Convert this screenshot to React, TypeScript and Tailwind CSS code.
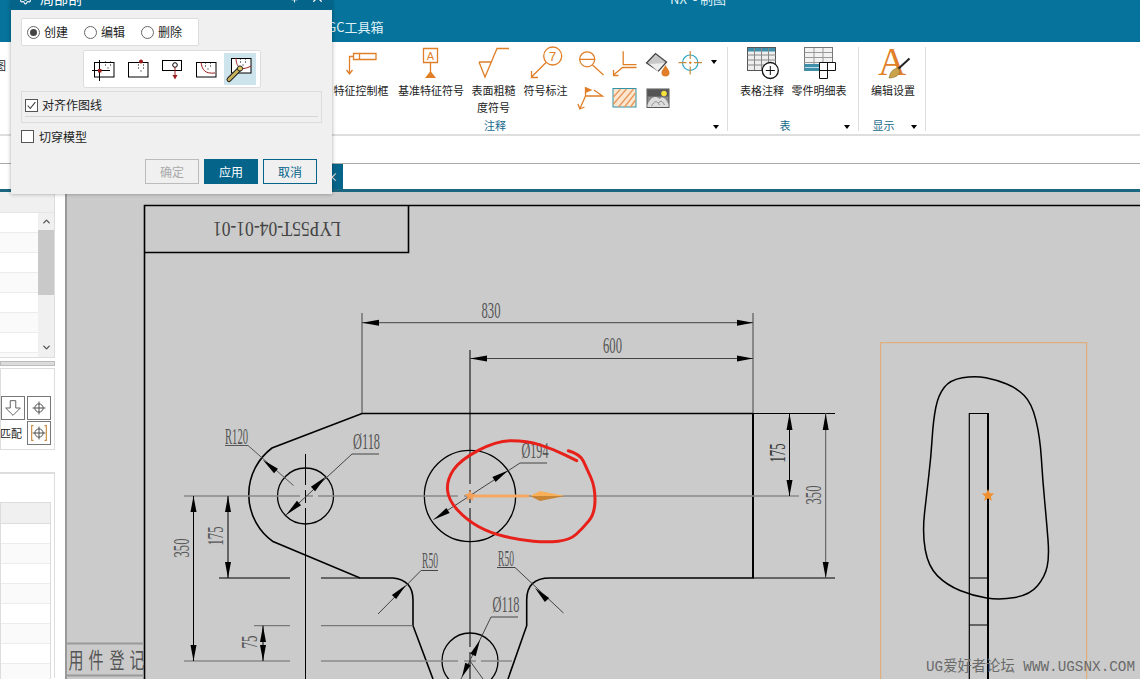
import { ChevronDown, ChevronUp, Settings, Pin, X } from "lucide-react";
import type { ReactNode } from "react";

type P = [number, number];

const orange = "#e07f28";

function smooth(pts: P[], closed = false) {
  const mid = (a: P, b: P): P => [(a[0] + b[0]) / 2, (a[1] + b[1]) / 2];
  if (closed) {
    const n = pts.length;
    let d = `M${mid(pts[n - 1], pts[0]).join(" ")}`;
    pts.forEach((p, i) => {
      d += ` Q${p.join(" ")} ${mid(p, pts[(i + 1) % n]).join(" ")}`;
    });
    return d + "Z";
  }
  let d = `M${pts[0].join(" ")}`;
  for (let i = 1; i < pts.length - 1; i++) {
    d += ` Q${pts[i].join(" ")} ${mid(pts[i], pts[i + 1]).join(" ")}`;
  }
  return d + ` L${pts[pts.length - 1].join(" ")}`;
}

function Arrow({ tip, base, w = 3, fill = "#000" }: { tip: P; base: P; w?: number; fill?: string }) {
  const dx = base[0] - tip[0];
  const dy = base[1] - tip[1];
  const l = Math.hypot(dx, dy);
  const nx = (-dy / l) * w;
  const ny = (dx / l) * w;
  return <polygon points={`${tip.join(",")} ${base[0] + nx},${base[1] + ny} ${base[0] - nx},${base[1] - ny}`} fill={fill} />;
}

function Star({ x, y, r, fill }: { x: number; y: number; r: number; fill: string }) {
  const pts = Array.from({ length: 10 }, (_, i) => {
    const a = (Math.PI / 5) * i - Math.PI / 2;
    const rr = i % 2 ? r * 0.45 : r;
    return `${x + rr * Math.cos(a)},${y + rr * Math.sin(a)}`;
  });
  return <polygon points={pts.join(" ")} fill={fill} />;
}

function DimText({ x, y, w, size = 23, rot = 0, fill = "#555", children }: { x: number; y: number; w: number; size?: number; rot?: number; fill?: string; children: ReactNode }) {
  return (
    <text
      x={x}
      y={y}
      textLength={w}
      lengthAdjust="spacingAndGlyphs"
      textAnchor="middle"
      dominantBaseline="central"
      fontSize={size}
      fill={fill}
      transform={rot ? `rotate(${rot} ${x} ${y})` : undefined}
      className="font-['Liberation_Serif','Noto_Sans_CJK_SC',serif]"
    >
      {children}
    </text>
  );
}

const redMark: P[] = [[568.3, 450.7], [580, 454], [586.7, 468.3], [595, 486.7], [595, 513.3], [583, 528], [570, 540], [546.7, 542.3], [520, 540], [490, 533], [466.7, 520], [448.3, 500], [446.7, 480], [460, 460], [496.7, 440.7], [526.7, 440.7], [553, 449], [576.7, 460.7]];
const sideBlob: P[] = [[975, 375.7], [950, 380], [938.3, 395], [933.3, 420], [931, 456.7], [926.7, 493.3], [922.3, 533.3], [928.3, 566.7], [946.7, 585], [973.3, 596], [1000, 600], [1030, 595], [1045, 576.7], [1049.3, 556.7], [1046.7, 523], [1042.7, 480], [1040, 436.7], [1031.7, 403], [1016.7, 388], [996.7, 380]];

function Drawing() {
  return (
    <svg viewBox="67 192 1073 487" className="block w-full h-full">
      {/* sheet */}
      <path d="M1140 205.5H144.5V679M144.5 252.5H408.5V205.5" fill="none" stroke="#000" strokeWidth="1.6" />
      <DimText x={277} y={229} w={128} size={21} rot={180} fill="#444">LYP55T-04-01-01</DimText>
      <path d="M67 643.5H144M67 675.5H144" stroke="#9a9a9a" strokeWidth="2" />
      <DimText x={76} y={660} w={15} size={22} fill="#555">用</DimText>
      <DimText x={96} y={660} w={15} size={22} fill="#555">件</DimText>
      <DimText x={117} y={660} w={15} size={22} fill="#555">登</DimText>
      <DimText x={137} y={660} w={15} size={22} fill="#555">记</DimText>

      {/* outline */}
      <path d="M753 413.5H362L272 448A58 58 0 0 0 273 541.6L360 578H393Q413 580 413 600V625.7L433 679M508 679L526.7 625.7V600Q526.7 578 550 578H753V413.5" fill="none" stroke="#000" strokeWidth="1.6" />
      <path d="M753 413V578" stroke="#000" strokeWidth="2" />
      <circle cx="305.5" cy="496" r="28" fill="none" stroke="#000" strokeWidth="1.3" />
      <circle cx="470" cy="496" r="45.7" fill="none" stroke="#000" strokeWidth="1.3" />
      <circle cx="470" cy="661" r="28" fill="none" stroke="#000" strokeWidth="1.3" />

      {/* center lines */}
      <path d="M184 496H300M306 496H313M318 496H458M464 496H799M184 661H290M321 661H458M464 661H476M481 661H512" stroke="#8a8a8a" strokeWidth="1.6" />
      <path d="M305.5 454V485M305.5 490V503M305.5 508V679M470 350V484M470 490V503M470 508V647M470 652V679" stroke="#000" strokeWidth="1" />
      <path d="M219 578H290M321 578H360M753 413.5H835M753 578H835" stroke="#000" strokeWidth="1" />
      <path d="M254 625.7H290M321 625.7H413" stroke="#666" strokeWidth="1" />

      {/* 830 / 600 */}
      <path d="M362 313V413M753 313V413M362 322.7H753M470 358.5H753" stroke="#444" strokeWidth="1" />
      <Arrow tip={[362, 322.7]} base={[379, 322.7]} />
      <Arrow tip={[753, 322.7]} base={[737, 322.7]} />
      <Arrow tip={[470, 358.5]} base={[487, 358.5]} />
      <Arrow tip={[753, 358.5]} base={[737, 358.5]} />
      <DimText x={491} y={310} w={19}>830</DimText>
      <DimText x={612.5} y={345.5} w={19}>600</DimText>

      {/* right dims */}
      <path d="M789.5 413V496" stroke="#000" strokeWidth="1" />
      <path d="M825.7 413V578" stroke="#555" strokeWidth="1" />
      <Arrow tip={[789.5, 413.5]} base={[789.5, 430]} />
      <Arrow tip={[789.5, 496]} base={[789.5, 480]} />
      <Arrow tip={[825.7, 413.5]} base={[825.7, 430]} />
      <Arrow tip={[825.7, 578]} base={[825.7, 562]} />
      <DimText x={777} y={453} w={19} rot={-90} fill="#333">175</DimText>
      <DimText x={813.5} y={495} w={19} rot={-90}>350</DimText>

      {/* left dims */}
      <path d="M193.5 496V661M228 496V578M263 625.7V661" stroke="#000" strokeWidth="1" />
      <Arrow tip={[193.5, 496]} base={[193.5, 512]} />
      <Arrow tip={[193.5, 661]} base={[193.5, 645]} />
      <Arrow tip={[228, 496]} base={[228, 512]} />
      <Arrow tip={[228, 578]} base={[228, 562]} />
      <Arrow tip={[263, 626]} base={[263, 642]} />
      <Arrow tip={[263, 661]} base={[263, 645]} />
      <DimText x={181} y={548} w={19} rot={-90}>350</DimText>
      <DimText x={215} y={536} w={19} rot={-90}>175</DimText>
      <DimText x={249} y={642} w={13} rot={-90}>75</DimText>

      {/* leaders */}
      <path d="M225 445.5H248L293.5 485.5" fill="none" stroke="#555" strokeWidth="1" />
      <Arrow tip={[263, 460]} base={[276, 471]} />
      <DimText x={236.5} y={436} w={23}>R120</DimText>

      <path d="M379 454H352L286 515" fill="none" stroke="#444" strokeWidth="1" />
      <Arrow tip={[326, 476.5]} base={[313, 489]} />
      <Arrow tip={[286, 515]} base={[299, 503]} />
      <DimText x={366.5} y={441} w={27}>Ø118</DimText>

      <path d="M547 463H520L433.5 519.5" fill="none" stroke="#444" strokeWidth="1" />
      <Arrow tip={[508, 470.5]} base={[494, 479.5]} />
      <Arrow tip={[434, 519.5]} base={[448, 510.5]} />
      <DimText x={535} y={450} w={27}>Ø194</DimText>

      <path d="M438 570.5H421L378 614" fill="none" stroke="#444" strokeWidth="1" />
      <Arrow tip={[406, 585]} base={[394, 597]} />
      <DimText x={430} y={560} w={16}>R50</DimText>

      <path d="M497 567.5H515L563.5 613" fill="none" stroke="#444" strokeWidth="1" />
      <Arrow tip={[535, 588]} base={[547, 600]} />
      <DimText x={506} y={558.5} w={16}>R50</DimText>

      <path d="M518 617H491L461 679M470 661L483 679" fill="none" stroke="#444" strokeWidth="1" />
      <Arrow tip={[480, 640]} base={[473, 655]} />
      <Arrow tip={[462, 677]} base={[468, 664]} />
      <DimText x={506} y={604} w={27}>Ø118</DimText>

      {/* vector handle */}
      <path d="M470 496H529" stroke="#f5a863" strokeWidth="3" />
      <polygon points="530,496 540,491 565,496" fill="#f7b058" />
      <polygon points="530,496 540,501 565,496" fill="#c98536" />
      <Star x={470} y={496} r={6} fill="#f5a05a" />

      {/* red pen mark */}
      <path d={smooth(redMark)} fill="none" stroke="#e8201a" strokeWidth="3" strokeLinecap="round" />

      {/* side view */}
      <rect x="880.7" y="342.7" width="206" height="360" fill="none" stroke="#e5a66c" strokeWidth="1" />
      <path d={smooth(sideBlob, true)} fill="none" stroke="#000" strokeWidth="1.5" />
      <path d="M969.3 679V413.5H988M969.3 578H988M969.3 625H988" fill="none" stroke="#000" strokeWidth="1.2" />
      <path d="M988 413V679" stroke="#000" strokeWidth="2" />
      <Star x={988} y={495.5} r={6.5} fill="#ef8f2e" />

      {/* forum watermark */}
      <text x="926" y="671" textLength="209" lengthAdjust="spacingAndGlyphs" fontSize="15" fill="#6a6a6a" className="font-['Liberation_Mono','Noto_Sans_CJK_SC',monospace]">
        UG爱好者论坛 WWW.UGSNX.COM
      </text>
    </svg>
  );
}

function Rows({ n, className }: { n: number; className?: string }) {
  return (
    <div className={className}>
      {Array.from({ length: n }, (_, i) => (
        <div key={i} className={`h-[20px] border-b border-[#ececec] ${i % 2 ? "bg-[#fafafa]" : "bg-white"}`} />
      ))}
    </div>
  );
}

function Crosshair({ bracket }: { bracket?: boolean }) {
  return (
    <svg viewBox="0 0 24 24" className="w-[24px] h-[24px] border border-[#777] bg-white">
      <circle cx="12" cy="12" r="4.5" fill="none" stroke="#444" strokeWidth="1" />
      <path d="M12 5V19M5 12H19" stroke="#444" strokeWidth="1" />
      {bracket && <path d="M6 4H4V20H6M18 4H20V20H18" fill="none" stroke="#c98a3c" strokeWidth="1.2" />}
    </svg>
  );
}

function LeftPanel() {
  return (
    <div className="w-[65px] shrink-0 h-full bg-white overflow-hidden">
      <div className="w-[55px] h-[166px] border-r border-b border-[#ddd] flex flex-col">
        <div className="h-[21px] shrink-0 bg-[#f0f0f0] border-b border-[#e6e6e6]" />
        <div className="flex flex-1 overflow-hidden">
          <Rows n={8} className="w-[38px] shrink-0" />
          <div className="w-[16px] bg-[#f0f0f0] flex flex-col items-center">
            <ChevronUp size={11} strokeWidth={3} className="text-[#555] mt-[3px]" />
            <div className="w-full h-[65px] bg-[#c9c9c9] mt-[3px]" />
            <ChevronDown size={11} strokeWidth={3} className="text-[#555] mt-[47px]" />
          </div>
        </div>
      </div>
      <div className="w-[55px] h-[5px] mt-[3px] bg-[#dcdcdc] border border-[#bbb]" />
      <div className="w-[55px] h-[82px] mt-[2px] border border-[#ddd] pt-[27px] flex flex-col gap-[1px] items-end pr-[3px]">
        <div className="flex gap-[2px]">
          <svg viewBox="0 0 24 24" className="w-[24px] h-[24px] border border-[#777] bg-white">
            <path d="M9 4H15V12H20L12 20L4 12H9Z" fill="none" stroke="#555" strokeWidth="1" />
          </svg>
          <Crosshair />
        </div>
        <div className="flex gap-[2px] items-center">
          <span className="w-[25px] text-[11px] leading-none text-[#222] whitespace-nowrap">匹配</span>
          <Crosshair bracket />
        </div>
      </div>
      <div className="w-[55px] h-[206px] mt-[22px] border-t-2 border-r border-[#ddd] pt-[28px]">
        <div className="w-[51px] border border-[#ddd] border-b-0">
          <div className="h-[21px] bg-[#f0f0f0] border-b border-[#ddd]" />
          <Rows n={8} />
        </div>
      </div>
    </div>
  );
}

function Ribbon1({ box, children }: { box: string; children: ReactNode }) {
  return (
    <svg viewBox={box} className="w-full h-[35px] block overflow-visible" fill="none" strokeWidth="1.3">
      {children}
    </svg>
  );
}

function ToolItem({ w, label, icon }: { w: string; label: ReactNode; icon: ReactNode }) {
  return (
    <div className={`${w} shrink-0 flex flex-col items-center`}>
      <div className="w-full h-[35px]">{icon}</div>
      <div className="text-[11px] leading-[17px] text-[#222] text-center">{label}</div>
    </div>
  );
}

function Group({ w, title, pad, children }: { w: string; title: string; pad: string; children: ReactNode }) {
  return (
    <div className={`${w} shrink-0 h-[84px] border-r border-[#ddd] flex flex-col`}>
      <div className="h-[70px] flex">{children}</div>
      <div className={`relative h-[14px] pt-[2px] flex items-center justify-center ${pad}`}>
        <span className="text-[11px] leading-none text-[#16698c]">{title}</span>
        <span className="absolute right-[8px] top-[8px] w-0 h-0 border-x-[3px] border-x-transparent border-t-[4px] border-t-black" />
      </div>
    </div>
  );
}

function Toolbar() {
  return (
    <div className="h-[94px] shrink-0 bg-white border-b-2 border-[#dedede] pt-[5px] flex text-[11px]">
      <div className="w-[263px] shrink-0 pt-[10px] -indent-[5px] text-[#222]">图</div>
      <Group w="w-[465px]" title="注释" pad="">
        <div className="w-[68px] shrink-0" />
        <ToolItem
          w="w-[60px]"
          label="特征控制框"
          icon={
            <Ribbon1 box="331 47 60 35">
              <path d="M353.5 53.5H376V59.5H353.5ZM359.5 53.5V59.5M353.5 56.5H349.5V73M346.5 70L349.5 74L352.5 70" stroke={orange} />
            </Ribbon1>
          }
        />
        <ToolItem
          w="w-[80px]"
          label="基准特征符号"
          icon={
            <Ribbon1 box="391 47 80 35">
              <path d="M423.5 48.5H437.5V62.5H423.5ZM430.5 62.5V72" stroke={orange} />
              <polygon points="425,78 436,78 430.5,71" fill={orange} />
              <text x="430.5" y="59.5" textAnchor="middle" fontSize="11" fill={orange} className="font-['Liberation_Sans',sans-serif]">A</text>
            </Ribbon1>
          }
        />
        <ToolItem
          w="w-[45px]"
          label={<>表面粗糙<br />度符号</>}
          icon={
            <Ribbon1 box="471 47 45 35">
              <path d="M479 62H491M479 62L485 77L497 48.5H509" stroke={orange} />
            </Ribbon1>
          }
        />
        <ToolItem
          w="w-[59px]"
          label="符号标注"
          icon={
            <Ribbon1 box="516 47 59 35">
              <circle cx="552.7" cy="56" r="9" stroke={orange} />
              <path d="M546 62.5L531.5 77M531.5 71V77.5H538" stroke={orange} />
              <text x="552.7" y="60.5" textAnchor="middle" fontSize="13" fill={orange} className="font-['Liberation_Sans',sans-serif]">7</text>
            </Ribbon1>
          }
        />
        <div className="w-[132px] shrink-0 grid grid-cols-[33px_33px_33px_33px] grid-rows-[37px_27px] items-start">
          <svg viewBox="574.5 47 33 37" className="w-[33px] h-[37px]" fill="none" strokeWidth="1.3">
            <circle cx="586.7" cy="59.3" r="7.5" stroke={orange} />
            <path d="M579.2 59.3H594.2M592 65L603 75" stroke={orange} />
          </svg>
          <svg viewBox="607.5 47 33 37" className="w-[33px] h-[37px]" fill="none" strokeWidth="1.3">
            <path d="M622.7 51.3V64.7H636M636 67.5H622L613 75M613 70V75.5H618" stroke={orange} />
          </svg>
          <svg viewBox="640.5 47 33 37" className="w-[33px] h-[37px]" fill="none">
            <polygon points="646,63 655,53.5 666,62 658,71" fill="#c8c8c8" stroke="#444" strokeWidth="1.3" />
            <path d="M649 64L657 71L664 63Z" fill="#eee" />
            <path d="M665 65C667 69 669 70 669 73C669 75.5 667 76.5 665 76.5C663 76.5 661 75.5 661 73C661 70 663 69 665 65Z" fill={orange} />
          </svg>
          <div className="relative w-[33px] h-[37px]">
            <svg viewBox="673.5 47 33 37" className="w-[33px] h-[37px]" fill="none" strokeWidth="1.2">
              <circle cx="689.7" cy="62.7" r="7.7" stroke="#35a7c9" />
              <path d="M689.7 51V59M689.7 66.5V74.5M678 62.7H686M693.5 62.7H701.5" stroke="#c98a3c" />
              <path d="M689.7 61.5V64M688.5 62.7H691" stroke={orange} />
            </svg>
            <span className="absolute left-[37px] top-[13px] w-0 h-0 border-x-[3px] border-x-transparent border-t-[4px] border-t-black" />
          </div>
          <svg viewBox="574.5 84 33 27" className="w-[33px] h-[27px]" fill="none" strokeWidth="1.3">
            <polygon points="585,87 592,90 585,93" fill={orange} />
            <path d="M585 87V96M585 96H602L593.5 90M585 96L579.5 108.5M577.5 104L579.3 109L584 107" stroke={orange} />
          </svg>
          <svg viewBox="607.5 84 33 27" className="w-[33px] h-[27px]" fill="none">
            <rect x="612.5" y="88.5" width="23" height="18.5" fill="#fbe6d0" stroke="#2f92a6" />
            <path d="M613 97L620 89M613 104L626 89M618 107L633 89M624 107L635 93M630 107L635 100" stroke="#e8965a" strokeWidth="1.3" />
          </svg>
          <svg viewBox="640.5 84 33 27" className="w-[33px] h-[27px]" fill="none">
            <rect x="646.5" y="89" width="22" height="18.5" fill="#8a8a8a" stroke="#555" />
            <rect x="647" y="89.5" width="21" height="7" fill="#555" />
            <path d="M647 105C650 97 655 95 659 99C661 96 665 97 668 104V107H647Z" fill="#ddd" />
            <path d="M651 106C654 101 656 100 659 105M658 103C660 100 662 101 664 105" stroke="#888" />
            <circle cx="663.5" cy="93.5" r="2.8" fill="#f7e13c" />
          </svg>
        </div>
      </Group>
      <Group w="w-[131px]" title="表" pad="pr-[16px]">
        <div className="w-[8px] shrink-0" />
        <ToolItem
          w="w-[52px]"
          label="表格注释"
          icon={
            <Ribbon1 box="735 47 52 35">
              <rect x="746.5" y="47.5" width="28" height="23" fill="#eee" stroke="#555" strokeWidth="1" />
              <rect x="747" y="48" width="27" height="3.5" fill="#3f8fab" />
              <path d="M746.5 55H775M746.5 60H775M746.5 65H775M753.5 48V70M760.5 48V70M767.5 48V70" stroke="#888" strokeWidth="1" />
              <circle cx="769.3" cy="70.5" r="8" fill="#fff" stroke="#111" />
              <path d="M769.3 66V75M764.8 70.5H773.8" stroke="#111" strokeWidth="1" />
            </Ribbon1>
          }
        />
        <ToolItem
          w="w-[62px]"
          label="零件明细表"
          icon={
            <Ribbon1 box="787 47 62 35">
              <rect x="803.5" y="47.5" width="28" height="23" fill="#f2f2f2" stroke="#777" strokeWidth="1" />
              <path d="M803.5 52.5H831M803.5 57.5H831M803.5 62.5H831M813 48V70M822 48V70" stroke="#999" strokeWidth="1" />
              <rect x="803.5" y="64" width="15" height="7" fill="#3f8fab" />
              <path d="M804 67.5H818" stroke="#bde" strokeWidth="1" />
              <path d="M818.5 62.5H834.5V70.5H818.5ZM826.5 62.5V70.5M818.5 70.5H826.5V78.5H818.5Z" fill="#fff" stroke="#111" strokeWidth="1" />
            </Ribbon1>
          }
        />
      </Group>
      <Group w="w-[67px]" title="显示" pad="pr-[17px]">
        <div className="w-[2px] shrink-0" />
        <ToolItem
          w="w-[64px]"
          label="编辑设置"
          icon={
            <Ribbon1 box="860 47 64 35">
              <text x="891" y="75" textAnchor="middle" fontSize="39" fill={orange} className="font-['Liberation_Serif',serif]">A</text>
              <path d="M908.5 58.5L896 70" stroke="#222" strokeWidth="2" />
              <path d="M897 68C891 69 889 73 888 78C893 78 898 76 899 71Z" fill="#c9a24a" stroke="#8a6d2a" strokeWidth="0.6" />
            </Ribbon1>
          }
        />
      </Group>
    </div>
  );
}

function DotGrid({ x, y }: { x: number; y: number }) {
  return (
    <path d={`M${x} ${y}h1M${x + 5} ${y}h1M${x} ${y + 3}h1M${x + 5} ${y + 3}h1M${x + 2.5} ${y + 6}h1`} stroke="#000" strokeWidth="1" />
  );
}

const dialogIcons = [
  <>
    <rect x="94.5" y="62.5" width="19.5" height="14.5" fill="#fff" stroke="#000" />
    <path d="M99.5 60V81M92 70.5H110" stroke="#000" />
    <rect x="98" y="69" width="3.5" height="3.5" fill="#9b1c1c" />
    <DotGrid x={105} y={62} />
  </>,
  <>
    <rect x="128.5" y="62.5" width="19.5" height="14.5" fill="#fff" stroke="#000" />
    <circle cx="141" cy="61.5" r="2" fill="#9b1c1c" />
    <DotGrid x={138} y={65} />
  </>,
  <>
    <rect x="162.5" y="60.5" width="19" height="10" fill="#fff" stroke="#000" />
    <circle cx="175" cy="65" r="2.3" fill="#fff" stroke="#000" />
    <path d="M175 67V77" stroke="#9b1c1c" />
    <polygon points="172.5,75 177.5,75 175,79.5" fill="#9b1c1c" />
  </>,
  <>
    <rect x="196.5" y="62.5" width="19.5" height="14.5" fill="#fff" stroke="#000" />
    <path d="M201 62C202 70 205 74 215 73" fill="none" stroke="#9b1c1c" />
    <DotGrid x={205} y={63} />
  </>,
  <>
    <rect x="231.5" y="58.5" width="19.5" height="14.5" fill="#fff" stroke="#000" />
    <path d="M236 58C236 66 240 72 251 66" fill="none" stroke="#9b1c1c" />
    <DotGrid x={240} y={59} />
    <path d="M229 79.5L239 69.5" stroke="#222" strokeWidth="5" strokeLinecap="round" />
    <path d="M229 79.5L239 69.5" stroke="#c9b05a" strokeWidth="3" strokeLinecap="round" />
    <circle cx="240" cy="68.5" r="2.6" fill="#d8c25e" stroke="#222" />
  </>,
];

function Radio({ label, on }: { label: string; on?: boolean }) {
  return (
    <div className="flex items-center gap-[4px] w-[57px]">
      <span className="w-[13px] h-[13px] rounded-full border border-[#666] bg-white flex items-center justify-center">
        {on && <span className="w-[7px] h-[7px] rounded-full bg-[#444]" />}
      </span>
      <span>{label}</span>
    </div>
  );
}

function Dialog() {
  return (
    <div className="absolute left-[11px] top-0 w-[321px] h-[194px] bg-[#f0f0f0] shadow-[0_0_4px_rgba(0,0,0,0.35)] flex flex-col text-[12px] text-[#222]">
      <div className="h-[10px] bg-[#05648a] overflow-hidden shrink-0 relative text-white">
        <div className="-mt-[11px] h-[18px] flex items-center pl-[8px] gap-[8px] leading-none text-[14px]">
          <Settings size={13} />
          <span>局部剖</span>
        </div>
        <Pin size={11} className="absolute left-[278px] -top-[8px]" />
        <X size={15} className="absolute left-[299px] -top-[10px]" />
      </div>
      <div className="pl-[10px] pt-[8px]">
        <div className="w-[178px] h-[28px] bg-white border border-[#ddd] rounded-[2px] flex items-center pl-[5px]">
          <Radio label="创建" on />
          <Radio label="编辑" />
          <Radio label="删除" />
        </div>
        <div className="ml-[62px] mt-[4px] w-[178px] h-[38px] bg-white border border-[#ddd] rounded-[2px] flex items-center pl-[3px]">
          {dialogIcons.map((icon, i) =>
            i === 4 ? (
              <svg key={i} viewBox="224 53 32 32" className="w-[32px] h-[32px] ml-px bg-[#cde4ec]">
                {icon}
              </svg>
            ) : (
              <svg key={i} viewBox={`${87 + 34 * i} 53 34 32`} className="w-[34px] h-[32px]">
                {icon}
              </svg>
            ),
          )}
        </div>
        <div className="mt-[3px] w-[301px] h-[32px] border border-[#dcdcdc] px-[3px] pt-[6px]">
          <div className="flex items-center gap-[4px] h-[14px]">
            <span className="w-[13px] h-[13px] border border-[#555] bg-white flex items-center justify-center">
              <svg viewBox="0 0 13 13" className="w-[11px] h-[11px]">
                <path d="M2 6.5L5 10L11 2.5" fill="none" stroke="#333" strokeWidth="1.2" />
              </svg>
            </span>
            <span>对齐作图线</span>
          </div>
          <div className="mt-[4px] h-px bg-[#d5d5d5]" />
        </div>
        <div className="mt-[7px] flex items-center gap-[5px] h-[13px]">
          <span className="w-[13px] h-[13px] border border-[#555] bg-white" />
          <span>切穿模型</span>
        </div>
        <div className="mt-[16px] ml-[124px] flex">
          <button className="w-[54px] h-[25px] border border-[#bbb] text-[#aaa] bg-[#f0f0f0]">确定</button>
          <button className="ml-[5px] w-[54px] h-[25px] bg-[#05648a] text-white">应用</button>
          <button className="ml-[5px] w-[54px] h-[25px] border border-[#05648a] text-[#05648a] bg-[#f0f0f0]">取消</button>
        </div>
      </div>
    </div>
  );
}

export default function App() {
  return (
    <div className="relative w-[1140px] h-[679px] overflow-hidden bg-white flex flex-col font-['Noto_Sans_CJK_SC','Noto_Sans',sans-serif]">
      <div className="h-[42px] shrink-0 bg-[#05739c] text-[#dff0f6] overflow-hidden">
        <div className="h-[16px] -mt-[9px] pl-[670px] text-[13px] leading-[16px] whitespace-pre">NX  - 制图</div>
        <div className="mt-[11px] pl-[318px] text-[13px] leading-[18px]">UGC工具箱</div>
      </div>
      <Toolbar />
      <div className="h-[28px] shrink-0 bg-white border-b border-[#aaa]" />
      <div className="h-[25px] shrink-0 bg-white flex">
        <div className="ml-[200px] w-[143px] bg-[#05648a] text-white text-[12px] text-right pr-[5px] leading-[25px]">×</div>
      </div>
      <div className="h-[3px] shrink-0 bg-[#1c6780]" />
      <div className="flex-1 flex min-h-0">
        <LeftPanel />
        <div className="flex-1 h-full bg-[#cbcbcb] border-l-2 border-[#999] min-w-0">
          <Drawing />
        </div>
      </div>
      <Dialog />
    </div>
  );
}
